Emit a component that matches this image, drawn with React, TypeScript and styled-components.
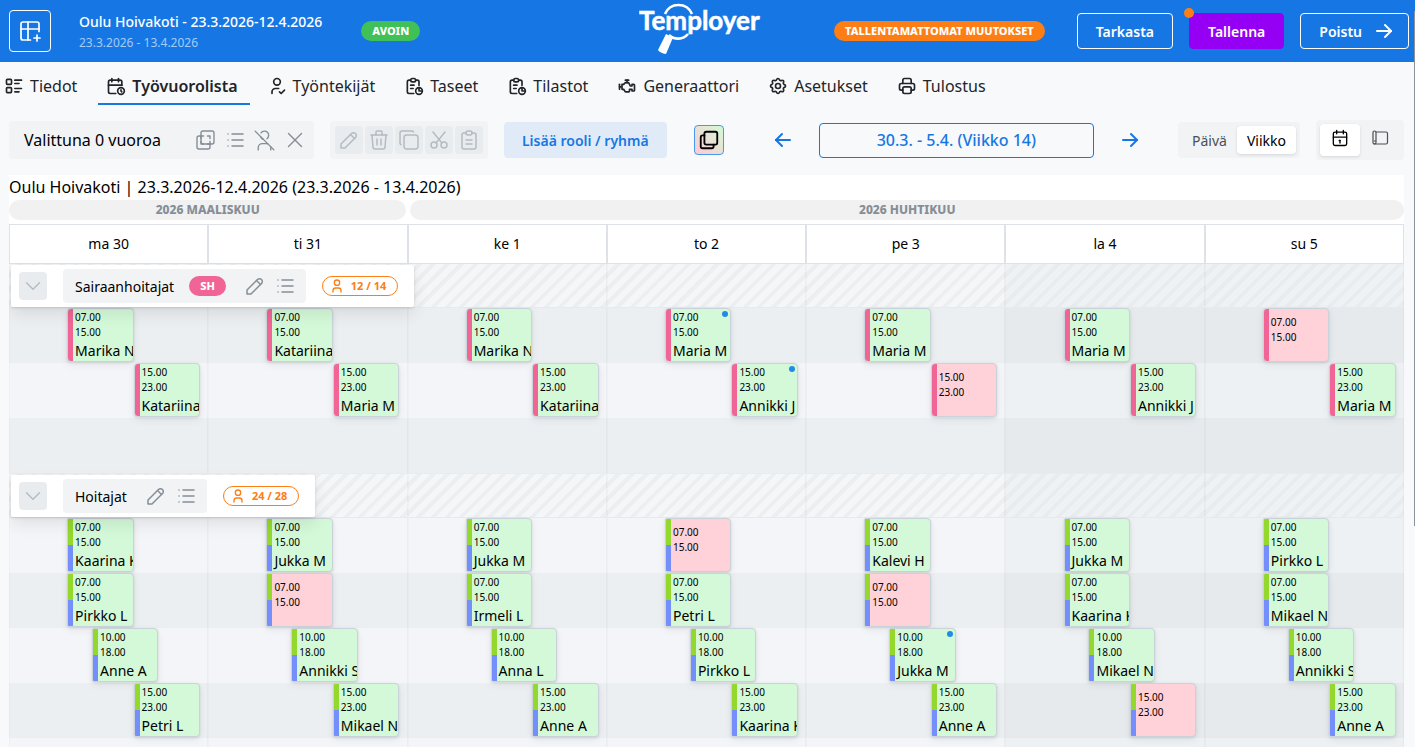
import React, { useState } from "react";
import styled, { createGlobalStyle, css } from "styled-components";
import {
  TbTablePlus, TbListDetails, TbCalendarTime, TbUserCheck, TbReport, TbEngine, TbSettings, TbPrinter,
  TbArrowRight, TbArrowLeft, TbList, TbUserOff, TbX, TbPencil, TbTrash, TbCopy, TbCut, TbClipboardText,
  TbBoxMultiple, TbCalendar, TbChevronDown, TbUser,
} from "react-icons/tb";

const blue = "#1677e4";
const orange = "#fd7e14";
const pink = "#f06595";
const lime = "#94d82d";
const indigo = "#748ffc";

const GlobalStyle = createGlobalStyle`
  *, *::before, *::after { box-sizing: border-box; }
  body {
    margin: 0;
    background: #f8f9fb;
    color: #000;
    font-family: "Noto Sans", "Open Sans", sans-serif;
    font-size: 14px;
  }
  button, input { font: inherit; color: inherit; }
  button { border: 0; background: none; padding: 0; cursor: pointer; }
  a { color: inherit; text-decoration: none; }
  svg { flex: none; display: block; }
`;

const Page = styled.div`
  height: 100vh;
  display: flex;
  flex-direction: column;
  overflow: hidden;
`;

const ScrollThumb = styled.div`
  position: fixed;
  top: 11px;
  right: 0;
  width: 1px;
  height: 69vh;
  background: #8b929a;
`;

/* ---------- top bar ---------- */

const TopBar = styled.header`
  flex: none;
  display: grid;
  grid-template-columns: 1fr auto 1fr;
  align-items: center;
  height: 62px;
  padding: 0 6px 0 9px;
  background: ${blue};
  color: #fff;
`;

const TopLeft = styled.div`
  display: flex;
  align-items: center;
`;

const TopRight = styled.div`
  display: flex;
  align-items: center;
  justify-content: flex-end;
  gap: 16px;
`;

const SquareButton = styled.button`
  display: grid;
  place-items: center;
  width: 42px;
  height: 42px;
  border: 1px solid #fff;
  border-radius: 4px;
`;

const Heading = styled.div`
  margin: 0 39px 0 28px;
  padding-top: 2px;
  white-space: nowrap;
`;

const HeadingTitle = styled.h1`
  margin: 0;
  font-size: 14px;
  line-height: 20px;
  font-weight: 500;
`;

const HeadingDates = styled.div`
  margin-top: 2px;
  font-size: 12px;
  line-height: 18px;
  color: #a3cbf6;
`;

const Badge = styled.span<{ $color: string; $outline?: boolean }>`
  display: inline-flex;
  align-items: center;
  gap: 6px;
  height: 20px;
  padding: 0 11px;
  border-radius: 10px;
  font-size: 11px;
  font-weight: 800;
  line-height: 18px;
  white-space: nowrap;
  ${({ $color, $outline }) =>
    $outline
      ? css`border: 1px solid ${$color}; color: ${$color}; padding: 0 11px 0 6px; font-weight: 700;`
      : css`background: ${$color}; color: #fff;`}
`;

const TopButton = styled.button<{ $solid?: boolean; $withIcon?: boolean }>`
  position: relative;
  display: flex;
  align-items: center;
  gap: 10px;
  height: 36px;
  padding: 0 ${({ $withIcon }) => ($withIcon ? 12 : 18)}px 0 18px;
  border: 1px solid ${({ $solid }) => ($solid ? "#9500f5" : "#fff")};
  border-radius: 4px;
  background: ${({ $solid }) => ($solid ? "#9500f5" : "transparent")};
  font-weight: 600;
  white-space: nowrap;
`;

const UnsavedBadge = styled(Badge)`
  margin-right: 16px;
`;

const UnsavedDot = styled.span`
  position: absolute;
  top: -6px;
  left: -6px;
  width: 10px;
  height: 10px;
  border-radius: 50%;
  background: ${orange};
`;

function Logo() {
  return (
    <svg width="140" height="56" viewBox="0 0 140 56" role="img" aria-label="Temployer">
      <g fill="none" stroke="#fff" strokeWidth="2.6">
        <path d="M26 11 C31 -1 48 -1 53 11" />
        <path d="M30 32 C35 37 44 37 49 31" />
      </g>
      <path d="M27 31 L34 34.500 L27 51 Q21 50 19 47 Z" fill="#fff" />
      <text x="0" y="27" fill="#fff" stroke="#fff" strokeWidth="0.5" fontFamily="Lato, sans-serif" fontWeight="700" fontSize="26">
        Temployer
      </text>
    </svg>
  );
}

/* ---------- tabs ---------- */

const Tabs = styled.nav`
  flex: none;
  display: flex;
  gap: 9px;
  height: 43px;
  margin: 0 -4px;
`;

const Tab = styled.a<{ $active?: boolean }>`
  display: flex;
  align-items: center;
  gap: 6px;
  padding: 6px 12px 0 8px;
  border-bottom: 2px solid ${({ $active }) => ($active ? blue : "transparent")};
  color: #212529;
  font-size: 16px;
  line-height: 24px;
  font-weight: ${({ $active }) => ($active ? 600 : 400)};
  white-space: nowrap;
`;

/* ---------- toolbar ---------- */

const Toolbar = styled.div`
  flex: none;
  display: flex;
  align-items: center;
  gap: 16px;
  height: 40px;
  margin: 15px 11px 15px 9px;
`;

const ToolBox = styled.div`
  display: flex;
  align-items: center;
  gap: 2px;
  height: 38px;
  padding: 5px;
  border-radius: 4px;
  background: #f1f3f5;
`;

const SelectionText = styled.span`
  margin: 0 28px 0 10px;
  font-size: 16px;
  line-height: 24px;
  white-space: nowrap;
`;

const IconButton = styled.button<{ $filled?: boolean }>`
  display: grid;
  place-items: center;
  width: 28px;
  height: 28px;
  border-radius: 4px;
  color: ${({ $filled }) => ($filled ? "#b4bbc2" : "#868e96")};
  background: ${({ $filled }) => ($filled ? "#e9ecef" : "transparent")};
`;

const AddButton = styled.button`
  height: 36px;
  padding: 0 18px;
  border-radius: 4px;
  background: #e1ebf8;
  color: ${blue};
  font-weight: 600;
  white-space: nowrap;
`;

const ColorButton = styled.button`
  display: grid;
  place-items: center;
  width: 30px;
  height: 30px;
  margin: 0 11px;
  border: 1px solid #4a98ee;
  border-radius: 4px;
  background: linear-gradient(45deg, #ffc9d3, #d3f9d8);
`;

const WeekNav = styled.div`
  flex: 1;
  display: flex;
  align-items: center;
  justify-content: center;
  gap: 22px;
  color: ${blue};
`;

const WeekArrow = styled(IconButton)`
  color: ${blue};
`;

const WeekButton = styled.button`
  flex: 0 1 275px;
  height: 35px;
  border: 1px solid ${blue};
  border-radius: 4px;
  font-size: 16px;
  font-weight: 500;
  white-space: nowrap;
`;

const Segmented = styled.div`
  display: flex;
  padding: 4px;
  border-radius: 4px;
  background: #f1f3f5;
`;

const Segment = styled.label<{ $active?: boolean; $tall?: boolean }>`
  display: grid;
  place-items: center;
  min-width: ${({ $tall }) => ($tall ? 40 : 54)}px;
  height: ${({ $tall }) => ($tall ? 32 : 28)}px;
  padding: 0 10px ${({ $tall }) => ($tall ? 4 : 0)}px;
  border-radius: 4px;
  color: ${({ $active }) => ($active ? "#000" : "#495057")};
  cursor: pointer;
  ${({ $active }) =>
    $active && css`background: #fff; box-shadow: 0 1px 3px rgba(0, 0, 0, 0.12);`}
`;

const HiddenRadio = styled.input`
  position: absolute;
  opacity: 0;
  width: 1px;
  height: 1px;
  margin: 0;
`;

function SelectShiftsIcon() {
  return (
    <svg width="24" height="24" viewBox="0 0 24 24" fill="none" stroke="currentColor" strokeWidth="1.4" strokeLinecap="round" strokeLinejoin="round">
      <rect x="8" y="3" width="13" height="13" rx="2" />
      <path d="M8 8h-2a2 2 0 0 0 -2 2v9a2 2 0 0 0 2 2h9a2 2 0 0 0 2 -2v-3" />
      <path d="M8 10.500v-2.500h2.500M14.500 8h2.500v2.500M17 13.500v2.500h-2.500M10.500 16h-2.500v-2.500" />
    </svg>
  );
}

function SidePanelIcon() {
  return (
    <svg width="18" height="18" viewBox="0 0 18 18" fill="none" stroke="#495057" strokeWidth="1.2" strokeLinejoin="round">
      <path d="M5 3h10a1.500 1.500 0 0 1 1.500 1.500v9a1.500 1.500 0 0 1 -1.500 1.500h-12" />
      <rect x="2" y="2" width="3" height="13" rx="1.500" />
      <path d="M5 12h-2" />
    </svg>
  );
}

/* ---------- schedule ---------- */

const Schedule = styled.main`
  flex: 1;
  min-height: 0;
  overflow: hidden;
  margin: 0 11px 0 9px;
  background: #fff;
`;

const ScheduleTitle = styled.h2`
  margin: 0;
  font-size: 16px;
  line-height: 25px;
  font-weight: 400;
`;

const Months = styled.div`
  display: grid;
  grid-template-columns: 2fr 5fr;
  gap: 4px;
  margin-bottom: 4px;
`;

const Month = styled.div`
  border-radius: 10px;
  background: #f1f1f1;
  color: #868e96;
  font-size: 12px;
  line-height: 20px;
  font-weight: 800;
  text-align: center;
`;

const Week = styled.div`
  display: grid;
  grid-template-columns: repeat(7, minmax(0, 1fr));
`;

const DayName = styled.div`
  height: 40px;
  border: 1px solid #dee2e6;
  background: #fff;
  line-height: 38px;
  text-align: center;
`;

const Group = styled.section`
  position: relative;
  border-bottom: 1px solid #e9ecef;
`;

const HatchCell = styled.div<{ $weekend: boolean }>`
  height: 44px;
  border-bottom: 1px solid #e6eaed;
  box-shadow: inset 1px 0 rgba(0, 0, 0, 0.02), inset -1px 0 rgba(0, 0, 0, 0.03);
  background: ${({ $weekend }) =>
    `repeating-linear-gradient(135deg, ${$weekend ? "#eef2f4 0 6px, #e8ecef 6px 10px" : "#f4f6f8 0 6px, #eceff1 6px 10px"})`};
`;

const DayCell = styled.div<{ $dark: boolean; $weekend: boolean }>`
  display: grid;
  grid-template-columns: repeat(24, minmax(0, 1fr));
  height: 55px;
  background: ${({ $dark, $weekend }) =>
    $weekend ? ($dark ? "#e6eaed" : "#edf1f4") : $dark ? "#ebeff2" : "#f3f5f8"};
  box-shadow: inset 1px 0 rgba(0, 0, 0, 0.02), inset -1px 0 rgba(0, 0, 0, 0.03);
`;

const GroupLabel = styled.div`
  position: absolute;
  z-index: 1;
  top: 1px;
  left: 2px;
  display: flex;
  align-items: center;
  gap: 16px;
  height: 42px;
  padding: 0 16px 0 8px;
  border-radius: 2px;
  background: #fff;
  box-shadow: 0 1px 3px rgba(0, 0, 0, 0.12), 0 8px 16px rgba(0, 0, 0, 0.08);
`;

const GroupName = styled.div`
  display: flex;
  align-items: center;
  gap: 15px;
  height: 34px;
  padding: 0 7px 0 12px;
  border-radius: 4px;
  background: #f1f3f5;
`;

const GroupTools = styled.div`
  display: flex;
  gap: 2px;
`;

const ShiftCard = styled.article<{ $start: number; $open: boolean; $roles: string[] }>`
  position: relative;
  grid-column: ${({ $start }) => $start + 1} / span 8;
  height: 54px;
  padding: ${({ $open }) => ($open ? 6 : 1)}px 0 0 7px;
  overflow: hidden;
  border: 1px solid #cbd3da;
  border-radius: ${({ $roles }) => ($roles.length > 1 ? "2px 4px 4px 2px" : "4px")};
  background: ${({ $open, $roles }) => css`
    linear-gradient(${$roles[0]} 50%, ${$roles[$roles.length - 1]} 50%) 0 0 / 5px 100% no-repeat,
    ${$open ? "#ffd1d8" : "#d3f9d8"}
  `};
  box-shadow: 0 1px 3px rgba(0, 0, 0, 0.1), 0 3px 8px rgba(0, 0, 0, 0.06);
`;

const ShiftTime = styled.div`
  font-size: 10px;
  line-height: 15px;
`;

const ShiftPerson = styled.div`
  margin-top: 1px;
  font-size: 14px;
  line-height: 20px;
  white-space: nowrap;
`;

const ChangeDot = styled.span`
  position: absolute;
  top: 2px;
  right: 2px;
  width: 6px;
  height: 6px;
  border-radius: 50%;
  background: #228be6;
`;

/* ---------- data ---------- */

const tabs = [
  { label: "Tiedot", Icon: TbListDetails },
  { label: "Työvuorolista", Icon: TbCalendarTime, active: true },
  { label: "Työntekijät", Icon: TbUserCheck },
  { label: "Taseet", Icon: TbReport },
  { label: "Tilastot", Icon: TbReport },
  { label: "Generaattori", Icon: TbEngine },
  { label: "Asetukset", Icon: TbSettings },
  { label: "Tulostus", Icon: TbPrinter },
];

const days = ["ma 30", "ti 31", "ke 1", "to 2", "pe 3", "la 4", "su 5"];

type Row = { start: number; people: string[] };

/* An empty name is an open shift; a trailing "*" marks an unsaved change. */
const groups: { name: string; badge?: string; count: string; roles: string[]; darkFirst: boolean; rows: Row[] }[] = [
  {
    name: "Sairaanhoitajat",
    badge: "SH",
    count: "12 / 14",
    roles: [pink],
    darkFirst: true,
    rows: [
      { start: 7, people: ["Marika N", "Katariina", "Marika N", "Maria M*", "Maria M", "Maria M", ""] },
      { start: 15, people: ["Katariina", "Maria M", "Katariina", "Annikki J*", "", "Annikki J", "Maria M"] },
      { start: 0, people: [] },
    ],
  },
  {
    name: "Hoitajat",
    count: "24 / 28",
    roles: [lime, indigo],
    darkFirst: false,
    rows: [
      { start: 7, people: ["Kaarina K", "Jukka M", "Jukka M", "", "Kalevi H", "Jukka M", "Pirkko L"] },
      { start: 7, people: ["Pirkko L", "", "Irmeli L", "Petri L", "", "Kaarina K", "Mikael N"] },
      { start: 10, people: ["Anne A", "Annikki S", "Anna L", "Pirkko L", "Jukka M*", "Mikael N", "Annikki S"] },
      { start: 15, people: ["Petri L", "Mikael N", "Anne A", "Kaarina K", "Anne A", "", "Anne A"] },
      { start: 0, people: [] },
    ],
  },
];

const hour = (h: number) => `${String(h).padStart(2, "0")}.00`;

function Shift({ start, person, roles }: { start: number; person: string; roles: string[] }) {
  const changed = person.endsWith("*");
  return (
    <ShiftCard $start={start} $open={!person} $roles={roles}>
      <ShiftTime>{hour(start)}</ShiftTime>
      <ShiftTime>{hour(start + 8)}</ShiftTime>
      {person && <ShiftPerson>{person.replace("*", "")}</ShiftPerson>}
      {changed && <ChangeDot />}
    </ShiftCard>
  );
}

export default function App() {
  const [range, setRange] = useState("week");
  const [view, setView] = useState("calendar");

  return (
    <Page>
      <GlobalStyle />
      <TopBar>
        <TopLeft>
          <SquareButton aria-label="Uusi lista"><TbTablePlus size={24} strokeWidth={1.7} /></SquareButton>
          <Heading>
            <HeadingTitle>Oulu Hoivakoti - 23.3.2026-12.4.2026</HeadingTitle>
            <HeadingDates>23.3.2026 - 13.4.2026</HeadingDates>
          </Heading>
          <Badge $color="#40c057">AVOIN</Badge>
        </TopLeft>
        <Logo />
        <TopRight>
          <UnsavedBadge $color={orange}>TALLENTAMATTOMAT MUUTOKSET</UnsavedBadge>
          <TopButton>Tarkasta</TopButton>
          <TopButton $solid>Tallenna<UnsavedDot /></TopButton>
          <TopButton $withIcon>Poistu<TbArrowRight size={24} /></TopButton>
        </TopRight>
      </TopBar>

      <Tabs>
        {tabs.map(({ label, Icon, active }) => (
          <Tab key={label} href="#" $active={active}>
            <Icon size={20} />
            {label}
          </Tab>
        ))}
      </Tabs>

      <Toolbar>
        <ToolBox>
          <SelectionText>Valittuna 0 vuoroa</SelectionText>
          <IconButton aria-label="Valitse vuorot"><SelectShiftsIcon /></IconButton>
          <IconButton aria-label="Lista"><TbList size={24} strokeWidth={1.5} /></IconButton>
          <IconButton aria-label="Poista työntekijä"><TbUserOff size={25} strokeWidth={1.3} /></IconButton>
          <IconButton aria-label="Tyhjennä valinta"><TbX size={26} strokeWidth={1.3} /></IconButton>
        </ToolBox>
        <ToolBox>
          <IconButton $filled aria-label="Muokkaa"><TbPencil size={24} strokeWidth={1.5} /></IconButton>
          <IconButton $filled aria-label="Poista"><TbTrash size={24} strokeWidth={1.5} /></IconButton>
          <IconButton $filled aria-label="Kopioi"><TbCopy size={24} strokeWidth={1.5} /></IconButton>
          <IconButton $filled aria-label="Leikkaa"><TbCut size={24} strokeWidth={1.5} /></IconButton>
          <IconButton $filled aria-label="Liitä"><TbClipboardText size={24} strokeWidth={1.5} /></IconButton>
        </ToolBox>
        <AddButton>Lisää rooli / ryhmä</AddButton>
        <ColorButton aria-label="Värit"><TbBoxMultiple size={22} /></ColorButton>
        <WeekNav>
          <WeekArrow aria-label="Edellinen viikko"><TbArrowLeft size={24} /></WeekArrow>
          <WeekButton>30.3. - 5.4. (Viikko 14)</WeekButton>
          <WeekArrow aria-label="Seuraava viikko"><TbArrowRight size={24} /></WeekArrow>
        </WeekNav>
        <Segmented>
          <Segment $active={range === "day"}>
            <HiddenRadio type="radio" name="range" checked={range === "day"} onChange={() => setRange("day")} />
            Päivä
          </Segment>
          <Segment $active={range === "week"}>
            <HiddenRadio type="radio" name="range" checked={range === "week"} onChange={() => setRange("week")} />
            Viikko
          </Segment>
        </Segmented>
        <Segmented>
          <Segment $tall $active={view === "calendar"}>
            <HiddenRadio type="radio" name="view" aria-label="Kalenteri" checked={view === "calendar"} onChange={() => setView("calendar")} />
            <TbCalendar size={20} strokeWidth={1.6} />
          </Segment>
          <Segment $tall $active={view === "panel"}>
            <HiddenRadio type="radio" name="view" aria-label="Paneeli" checked={view === "panel"} onChange={() => setView("panel")} />
            <SidePanelIcon />
          </Segment>
        </Segmented>
      </Toolbar>

      <Schedule>
        <ScheduleTitle>Oulu Hoivakoti | 23.3.2026-12.4.2026 (23.3.2026 - 13.4.2026)</ScheduleTitle>
        <Months>
          <Month>2026 MAALISKUU</Month>
          <Month>2026 HUHTIKUU</Month>
        </Months>
        <Week>
          {days.map((day) => <DayName key={day}>{day}</DayName>)}
        </Week>
        {groups.map((group) => (
          <Group key={group.name}>
            <GroupLabel>
              <IconButton $filled aria-label="Sulje ryhmä"><TbChevronDown size={26} strokeWidth={1.3} /></IconButton>
              <GroupName>
                {group.name}
                {group.badge && <Badge $color={pink}>{group.badge}</Badge>}
                <GroupTools>
                  <IconButton aria-label="Muokkaa ryhmää"><TbPencil size={24} strokeWidth={1.5} /></IconButton>
                  <IconButton aria-label="Ryhmän lista"><TbList size={24} strokeWidth={1.5} /></IconButton>
                </GroupTools>
              </GroupName>
              <Badge $color={orange} $outline><TbUser size={16} />{group.count}</Badge>
            </GroupLabel>
            <Week>
              {days.map((day, d) => <HatchCell key={day} $weekend={d > 4} />)}
            </Week>
            {group.rows.map((row, r) => (
              <Week key={r}>
                {days.map((day, d) => (
                  <DayCell key={day} $dark={(r % 2 === 0) === group.darkFirst} $weekend={d > 4}>
                    {row.people[d] !== undefined && (
                      <Shift start={row.start} person={row.people[d]} roles={group.roles} />
                    )}
                  </DayCell>
                ))}
              </Week>
            ))}
          </Group>
        ))}
      </Schedule>
      <ScrollThumb />
    </Page>
  );
}
